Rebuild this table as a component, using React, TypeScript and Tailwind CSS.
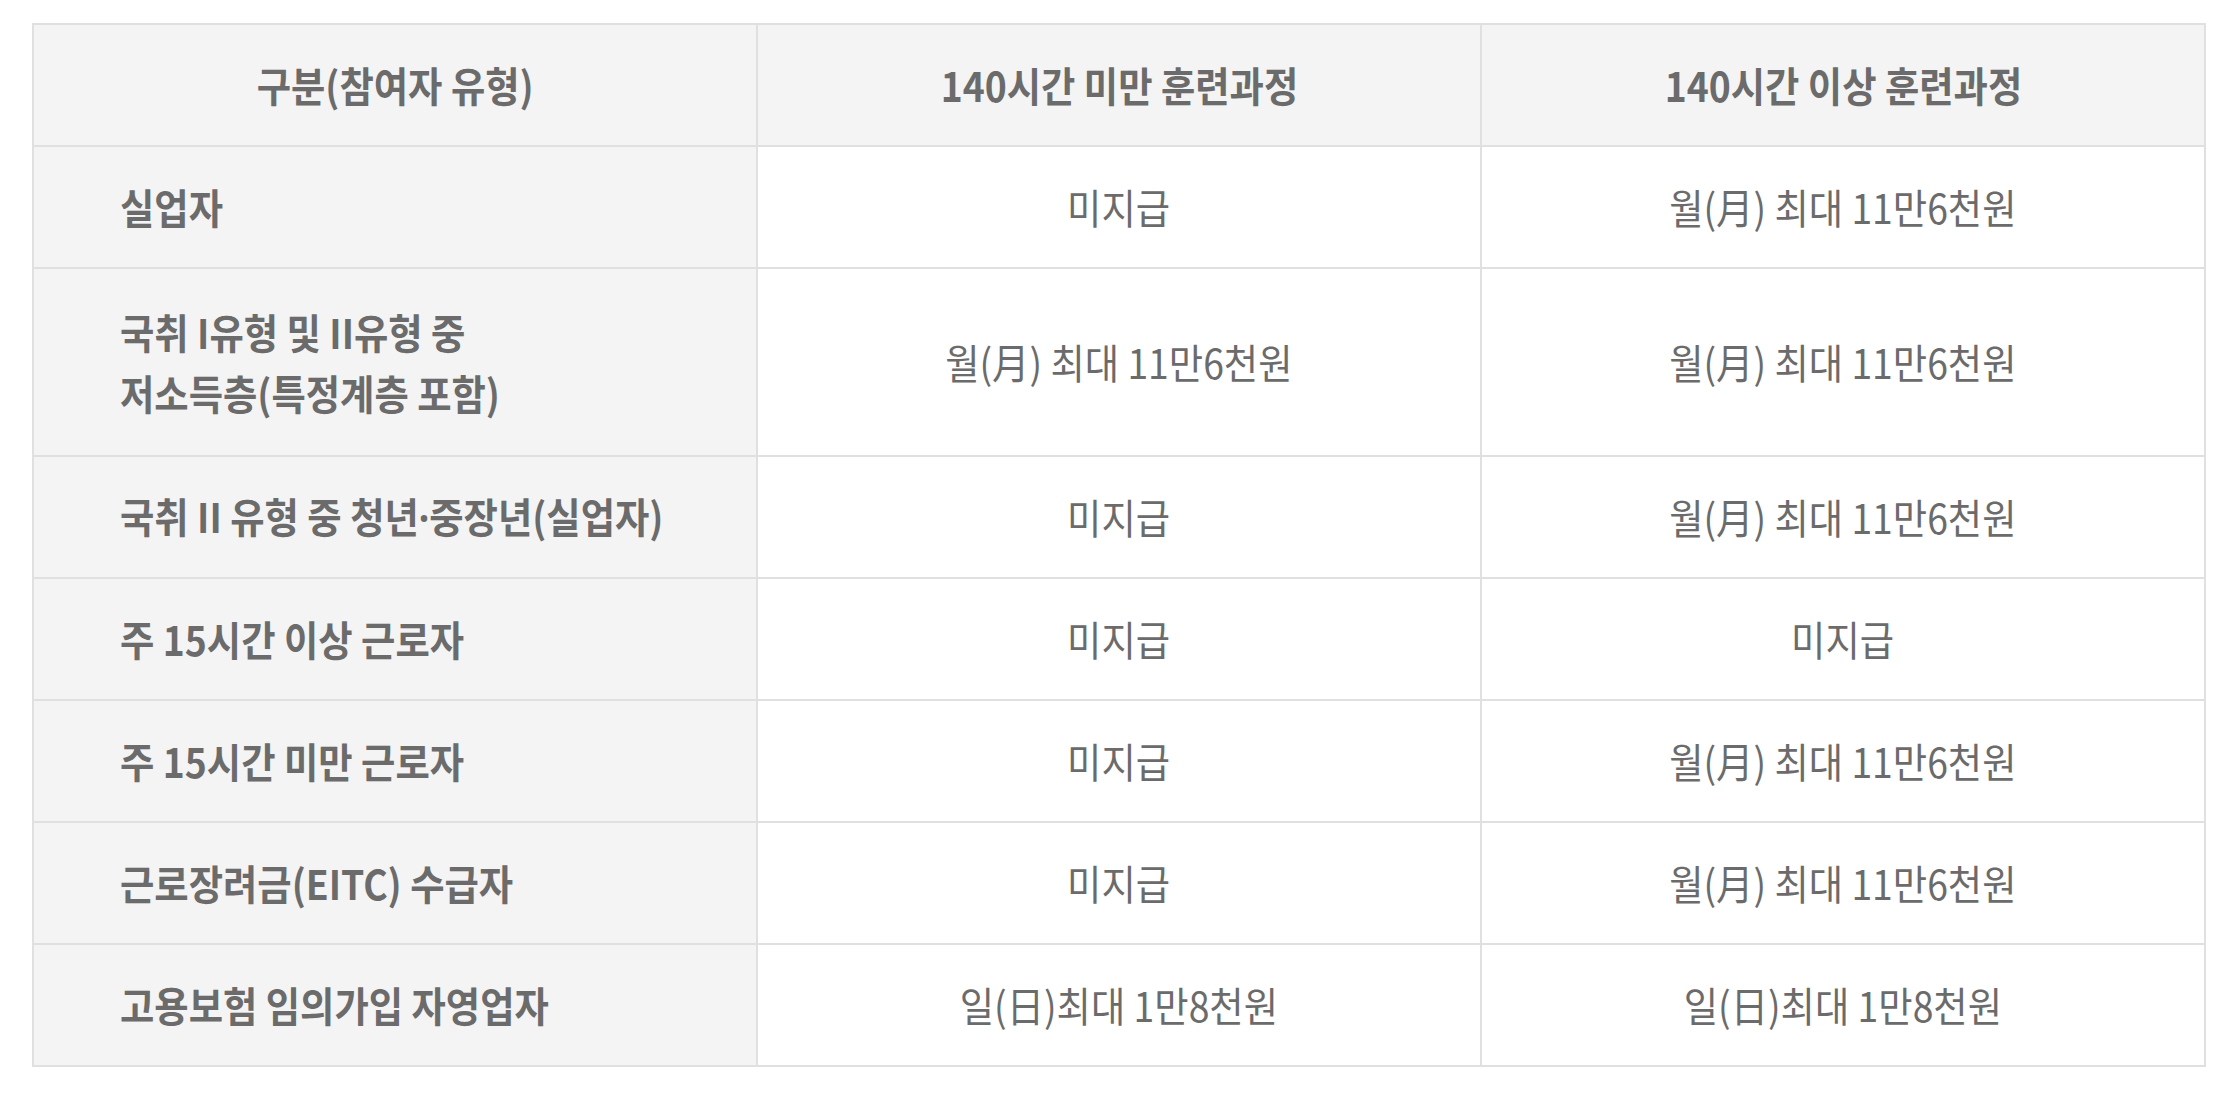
const rows: { label: React.ReactNode; short: string; long: string }[] = [
  { label: '실업자', short: '미지급', long: '월(月) 최대 11만6천원' },
  {
    label: (
      <>
        국취 I유형 및 II유형 중
        <br />
        저소득층(특정계층 포함)
      </>
    ),
    short: '월(月) 최대 11만6천원',
    long: '월(月) 최대 11만6천원',
  },
  {
    label: (
      <>
        국취 II 유형 중 청년<span className="font-['Noto_Sans',sans-serif]">·</span>중장년(실업자)
      </>
    ),
    short: '미지급',
    long: '월(月) 최대 11만6천원',
  },
  { label: '주 15시간 이상 근로자', short: '미지급', long: '미지급' },
  { label: '주 15시간 미만 근로자', short: '미지급', long: '월(月) 최대 11만6천원' },
  { label: '근로장려금(EITC) 수급자', short: '미지급', long: '월(月) 최대 11만6천원' },
  { label: '고용보험 임의가입 자영업자', short: '일(日)최대 1만8천원', long: '일(日)최대 1만8천원' },
];

export default function App() {
  return (
    <div className="min-h-screen bg-white pl-[32px] pt-[23px] font-['Noto_Sans_CJK_KR','Noto_Sans',sans-serif] text-[41px] leading-[1.5] text-[#6b6b6b]">
      <table className="w-[2174px] table-fixed border-collapse border-2 border-[#e0e0e0]">
        <thead>
          <tr className="bg-[#f4f4f4]">
            <th className="h-[122px] w-1/3 border-2 border-[#e0e0e0] text-center font-bold">
              <span className="inline-block scale-x-[0.91]">구분(참여자 유형)</span>
            </th>
            <th className="w-1/3 border-2 border-[#e0e0e0] text-center font-bold">
              <span className="inline-block scale-x-[0.91]">140시간 미만 훈련과정</span>
            </th>
            <th className="w-1/3 border-2 border-[#e0e0e0] text-center font-bold">
              <span className="inline-block scale-x-[0.91]">140시간 이상 훈련과정</span>
            </th>
          </tr>
        </thead>
        <tbody>
          {rows.map((r, i) => (
            <tr key={i}>
              <td className={`${i === 1 ? 'h-[188px]' : 'h-[122px]'} border-2 border-[#e0e0e0] bg-[#f4f4f4] pl-[86px] text-left font-bold`}>
                <span className="inline-block origin-left scale-x-[0.91]">{r.label}</span>
              </td>
              <td className="border-2 border-[#e0e0e0] bg-white text-center font-normal">
                <span className="inline-block scale-x-[0.91]">{r.short}</span>
              </td>
              <td className="border-2 border-[#e0e0e0] bg-white text-center font-normal">
                <span className="inline-block scale-x-[0.91]">{r.long}</span>
              </td>
            </tr>
          ))}
        </tbody>
      </table>
    </div>
  );
}
